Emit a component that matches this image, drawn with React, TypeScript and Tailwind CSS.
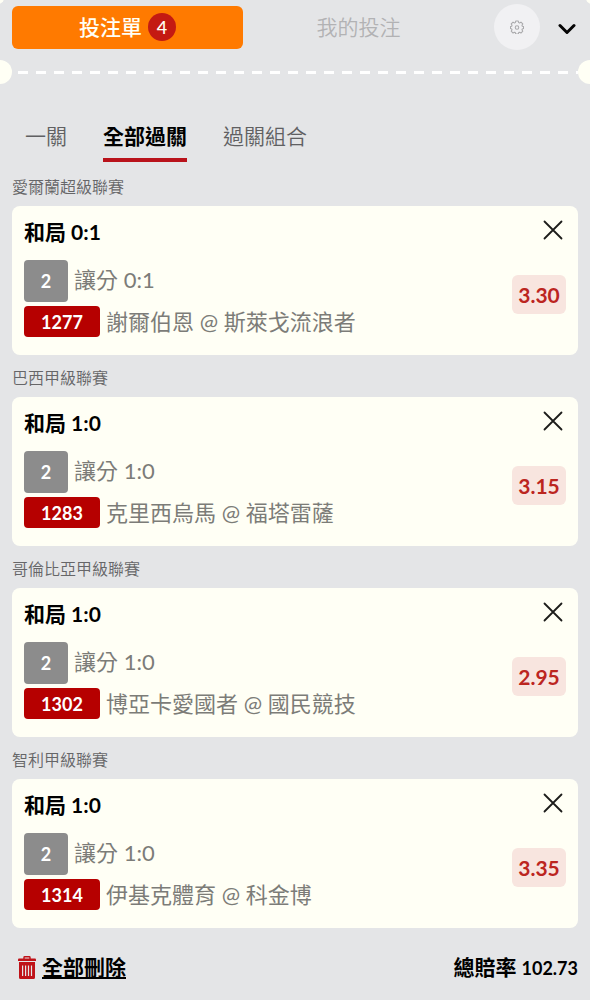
import React, { useState } from 'react';

interface Bet {
  id: string;
  league: string;
  pick: string;
  score: string;
  home: string;
  away: string;
  odds: string;
}

const BETS: Bet[] = [
  { id: '1277', league: '愛爾蘭超級聯賽', pick: '和局', score: '0:1', home: '謝爾伯恩', away: '斯萊戈流浪者', odds: '3.30' },
  { id: '1283', league: '巴西甲級聯賽', pick: '和局', score: '1:0', home: '克里西烏馬', away: '福塔雷薩', odds: '3.15' },
  { id: '1302', league: '哥倫比亞甲級聯賽', pick: '和局', score: '1:0', home: '博亞卡愛國者', away: '國民競技', odds: '2.95' },
  { id: '1314', league: '智利甲級聯賽', pick: '和局', score: '1:0', home: '伊基克體育', away: '科金博', odds: '3.35' },
];

const TABS = ['一關', '全部過關', '過關組合'];

const GearIcon: React.FC = () => (
  <svg viewBox="0 0 24 24" className="h-[14px] w-[14px]" fill="none" stroke="#a9a9ab" strokeWidth="1.8" strokeLinejoin="round" aria-hidden="true">
    <path d="M9.8 1.8h4.4l.7 2.7 1.5.6 2.4-1.4 3.1 3.1-1.4 2.4.6 1.5 2.1.6v3.4l-2.1.6-.6 1.5 1.4 2.4-3.1 3.1-2.4-1.4-1.5.6-.7 2.7H9.8l-.7-2.7-1.5-.6-2.4 1.4-3.1-3.1 1.4-2.4-.6-1.5-2.1-.6v-3.4l2.1-.6.6-1.5-1.4-2.4 3.1-3.1 2.4 1.4 1.5-.6z" />
    <circle cx="12" cy="13" r="3" />
  </svg>
);

const TrashIcon: React.FC = () => (
  <svg viewBox="0 0 18 23" className="h-[23px] w-[18px]" aria-hidden="true">
    <path d="M6 3V1.5Q6 .8 6.7.8h4.6q.7 0 .7.7V3" fill="none" stroke="#bf1218" strokeWidth="1.4" />
    <path d="M1 2.500h16q1 0 1 1V5H0V3.500q0-1 1-1z" fill="#bf1218" />
    <path fillRule="evenodd" d="M1 6h16v15.500q0 1.500-1.500 1.500h-13Q1 23 1 21.500zM4 9.500v10.500h1.200V9.500zM7 9.500v10.500h1.200V9.500zM9.900 9.500v10.500h1.200V9.500zM12.900 9.500v10.500h1.200V9.500z" fill="#bf1218" />
  </svg>
);

const BetCard: React.FC<{ bet: Bet; onRemove: () => void }> = ({ bet, onRemove }) => (
  <section>
    <h2 className="flex h-[42px] items-center pt-1 text-base font-[350] text-[#666668]">{bet.league}</h2>
    <div className="flex justify-between rounded-lg bg-[#fffff5] p-3">
      <div className="min-w-0">
        <h3 className="pb-3.5 text-[21px] leading-7 font-bold text-black">
          {bet.pick} {bet.score}
        </h3>
        <div className="flex items-center gap-1.5">
          <span className="flex h-[42px] w-11 items-center justify-center rounded-sm bg-[#8c8c8c] text-lg font-bold text-white">2</span>
          <span className="pb-1 text-[22px] leading-[31px] text-[#7c7c78]">讓分 {bet.score}</span>
        </div>
        <div className="mt-1 flex items-center gap-1.5 pb-1.5">
          <span className="flex h-[31px] w-[76px] items-center justify-center rounded-sm bg-[#b60000] text-lg font-bold text-white">{bet.id}</span>
          <span className="text-[22px] leading-[31px] text-[#7c7c78]">
            {bet.home} @ {bet.away}
          </span>
        </div>
      </div>
      <div className="flex flex-col items-end">
        <button type="button" aria-label="移除" onClick={onRemove} className="px-0.5 pt-px">
          <svg viewBox="0 0 22 22" className="h-[22px] w-[22px]" stroke="#1c1c1a" strokeWidth="1.8" strokeLinecap="round" aria-hidden="true">
            <path d="M2.500 2.500l17 17M19.500 2.500l-17 17" />
          </svg>
        </button>
        <span className="mt-[34px] flex h-[39px] w-[54px] items-center justify-center rounded-md bg-[#f8e5df] text-[21px] font-bold text-[#bc261f]">{bet.odds}</span>
      </div>
    </div>
  </section>
);

const App: React.FC = () => {
  const [bets, setBets] = useState(BETS);
  const [activeTab, setActiveTab] = useState('全部過關');

  return (
    <div className="relative min-h-screen overflow-hidden bg-[#e4e5e7] font-['Lato','Noto_Sans_CJK_TC',sans-serif]">
      <header className="flex items-center px-3 pt-1">
        <button type="button" className="flex h-[43px] flex-1 items-center justify-center gap-1.5 rounded-md bg-[#ff7a00] text-[21px] font-medium text-[#fffff5]">
          投注單
          <span className="flex h-7 w-7 items-center justify-center rounded-full bg-[#c41a12] text-lg">{bets.length}</span>
        </button>
        <button type="button" className="h-[43px] flex-1 text-[21px] font-[350] text-[#b2b2b4]">我的投注</button>
        <button type="button" aria-label="設定" className="ml-5 flex h-[46px] w-[46px] items-center justify-center rounded-full bg-[#f1f1f3]">
          <GearIcon />
        </button>
        <button type="button" aria-label="收合" className="ml-4 px-0.5 pt-1">
          <svg viewBox="0 0 18 12" className="h-3 w-[18px]" fill="none" stroke="#050505" strokeWidth="3" strokeLinecap="round" strokeLinejoin="round" aria-hidden="true">
            <path d="M2 2.500l7 7 7-7" />
          </svg>
        </button>
      </header>

      {/* ticket perforation */}
      <div className="mt-2.5 flex items-center">
        <span className="-ml-3 h-6 w-6 shrink-0 rounded-full bg-[#fffff5]" />
        <span className="ml-1.5 h-[3px] flex-1 bg-[repeating-linear-gradient(90deg,#fff_0_10px,transparent_10px_18px)]" />
        <span className="-mr-3 h-6 w-6 shrink-0 rounded-full bg-[#fffff5]" />
      </div>

      <nav className="mt-[34px] mb-0.5 flex gap-9 px-[25px]">
        {TABS.map((tab) => (
          <button
            key={tab}
            type="button"
            onClick={() => setActiveTab(tab)}
            className={`border-b-4 pb-1 text-[21px] leading-9 ${tab === activeTab ? 'border-[#b9121b] font-bold text-black' : 'border-transparent font-[350] text-[#606062]'}`}
          >
            {tab}
          </button>
        ))}
      </nav>

      <main className="px-3">
        {bets.map((bet) => (
          <BetCard key={bet.id} bet={bet} onRemove={() => setBets(bets.filter((b) => b.id !== bet.id))} />
        ))}
      </main>

      <footer className="flex h-[78px] items-center justify-between px-3">
        <button type="button" onClick={() => setBets([])} className="flex items-center gap-1.5 pl-1.5 text-[21px] font-bold text-black">
          <TrashIcon />
          <span className="underline decoration-2 underline-offset-2">全部刪除</span>
        </button>
        <p className="text-[21px] font-bold text-black">
          總賠率 <span className="text-lg">102.73</span>
        </p>
      </footer>

      {/* ticket corner notches */}
      <span className="absolute -top-2 -left-2 h-3 w-3 rounded-full bg-[#fffff5]" />
      <span className="absolute -top-2 -right-2 h-3 w-3 rounded-full bg-[#fffff5]" />
      <span className="absolute -bottom-4 -left-3 h-5 w-5 rounded-full bg-[#fffff5]" />
      <span className="absolute -right-3 -bottom-4 h-5 w-5 rounded-full bg-[#fffff5]" />
    </div>
  );
};

export default App;
